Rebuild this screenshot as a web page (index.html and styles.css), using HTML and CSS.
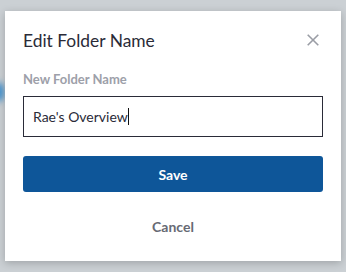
FILE: index.html
```html
<!DOCTYPE html>
<html lang="en">
<head>
  <meta charset="UTF-8">
  <meta name="viewport" content="width=device-width, initial-scale=1.0">
  <title>Edit Folder Name</title>
  <link rel="stylesheet" href="styles.css">
</head>
<body>
  <div class="backdrop">
    <div class="blur-spot"></div>

    <div class="dialog">
      <div class="dialog-header">
        <h1>Edit Folder Name</h1>
        <button class="close" aria-label="Close">
          <svg width="12" height="12" viewBox="0 0 12 12">
            <path d="M0.7 0.7 L11.3 11.3 M11.3 0.7 L0.7 11.3" stroke="#9a9da5" stroke-width="1.6" fill="none"/>
          </svg>
        </button>
      </div>

      <label class="field-label" for="folder-name">New Folder Name</label>
      <div class="input-box">
        <span class="input-text">Rae's Overview</span><span class="caret"></span>
      </div>

      <button class="button save">Save</button>
      <button class="button cancel">Cancel</button>
    </div>
  </div>
</body>
</html>
```

FILE: styles.css
```css
:root {
  --backdrop: #cbd0d4;
  --ink: #2a2b38;
  --muted: #9da0a9;
  --blue: #0e5699;
}

body {
  font-family: 'Lato', sans-serif;
  background-color: var(--backdrop);
  margin: 0;
  padding: 0;
}

.backdrop {
  position: relative;
  padding: 11px 5px;
  height: 250px;
}

.blur-spot {
  position: absolute;
  left: -6px;
  top: 82px;
  width: 10px;
  height: 20px;
  border-radius: 50%;
  background: #3b8fd0;
  filter: blur(3px);
}

.dialog {
  position: relative;
  background-color: white;
  box-shadow: 0 2px 8px rgba(0, 0, 0, 0.22);
  padding: 19px 18px 0;
  height: 231px;
  display: flex;
  flex-direction: column;
}

.dialog-header {
  display: flex;
  justify-content: space-between;
  align-items: center;
  height: 22px;
}

h1 {
  margin: 0;
  font-size: 17.4px;
  font-weight: 400;
  line-height: 22px;
  color: var(--ink);
}

.close {
  background: none;
  border: none;
  padding: 0;
  margin: -3px 4px 0 0;
  width: 12px;
  height: 12px;
  display: flex;
}

.field-label {
  margin-top: 19px;
  font-size: 13px;
  font-weight: 700;
  line-height: 16px;
  color: var(--muted);
}

.input-box {
  margin-top: 9px;
  height: 39px;
  border: 1px solid var(--ink);
  display: flex;
  align-items: center;
  padding-left: 9px;
  font-size: 14px;
  color: var(--ink);
}

.caret {
  width: 1px;
  height: 17px;
  background: #111;
}

.button {
  font-family: 'Lato', sans-serif;
  border: none;
  padding: 0;
  cursor: pointer;
  width: 100%;
}

.save {
  margin-top: 19px;
  height: 36px;
  background-color: var(--blue);
  color: white;
  border-radius: 3px;
  font-size: 14px;
  font-weight: 700;
}

.cancel {
  margin-top: 24px;
  height: 21px;
  background: none;
  color: #676a74;
  font-size: 14px;
  font-weight: 700;
}
```
